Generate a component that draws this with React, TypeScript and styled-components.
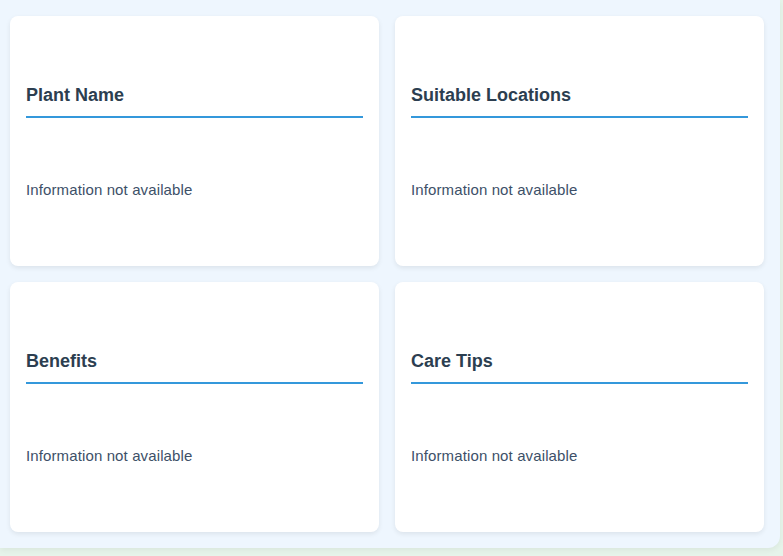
import React from "react";
import styled, { createGlobalStyle } from "styled-components";

const Global = createGlobalStyle`
  html, body { margin: 0; padding: 0; }
  body {
    background: #e6f4ea;
    font-family: "Liberation Sans", Arial, sans-serif;
    width: 783px;
    height: 556px;
    overflow: hidden;
  }
`;

const Panel = styled.div`
  width: 780px;
  height: 548px;
  box-sizing: border-box;
  padding: 16px 16px 16px 10px;
  background: #eef6fe;
  border-radius: 0 0 12px 0;
  box-shadow: 0 2px 6px rgba(0, 0, 0, 0.06);
  display: grid;
  grid-template-columns: 1fr 1fr;
  grid-template-rows: 1fr 1fr;
  gap: 16px;
`;

const Card = styled.section`
  background: #ffffff;
  border-radius: 8px;
  box-shadow: 0 2px 5px rgba(0, 0, 0, 0.08);
  padding: 0 16px;
  display: flex;
  flex-direction: column;
  justify-content: center;
  gap: 63px;
`;

const Title = styled.h3`
  margin: 0;
  font-size: 18px;
  line-height: 22px;
  font-weight: 700;
  color: #2c3e50;
  padding-bottom: 10px;
  border-bottom: 2px solid #3498db;
`;

const Text = styled.p`
  margin: 0;
  font-size: 15px;
  line-height: 18px;
  letter-spacing: 0.12px;
  color: #3d5068;
`;

const sections = ["Plant Name", "Suitable Locations", "Benefits", "Care Tips"];

export default function App() {
  return (
    <>
      <Global />
      <Panel>
        {sections.map((s) => (
          <Card key={s}>
            <Title>{s}</Title>
            <Text>Information not available</Text>
          </Card>
        ))}
      </Panel>
    </>
  );
}
